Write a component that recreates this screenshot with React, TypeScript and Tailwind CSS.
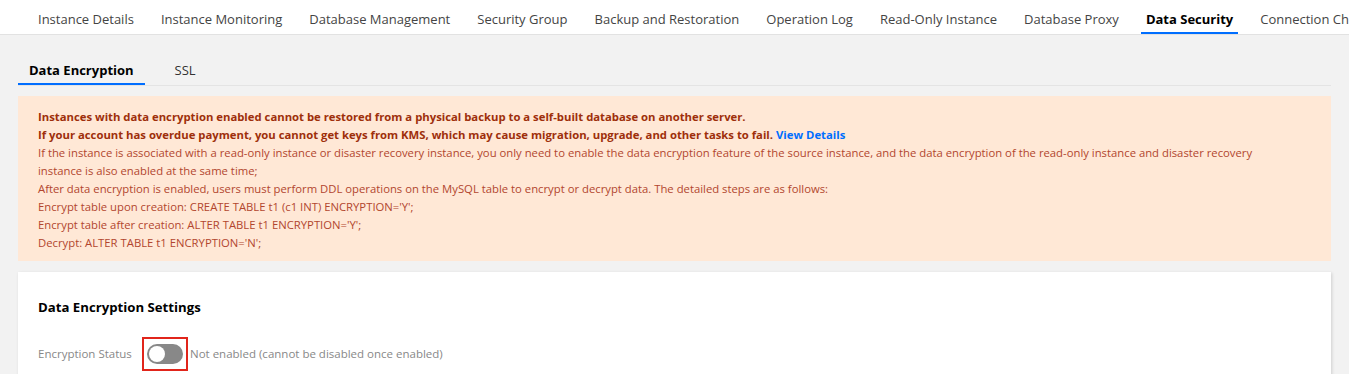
const tabs = [
  "Instance Details",
  "Instance Monitoring",
  "Database Management",
  "Security Group",
  "Backup and Restoration",
  "Operation Log",
  "Read-Only Instance",
  "Database Proxy",
  "Data Security",
  "Connection Check",
];

const font = { fontFamily: '"Open Sans", "Noto Sans", sans-serif' };

export default function App() {
  return (
    <div className="min-h-[374px] w-[1349px] overflow-hidden bg-[#f2f2f2] text-[#000]" style={font}>
      {/* top nav */}
      <div className="flex h-[35px] items-stretch overflow-hidden whitespace-nowrap border-b border-[#e2e2e2] bg-white pl-[33px]">
        {tabs.map((t) => {
          const active = t === "Data Security";
          return (
            <div
              key={t}
              className={`mr-[17px] flex shrink-0 items-center border-b-2 px-[5px] pt-[8px] text-[13px] ${
                active ? "border-[#006eff] font-bold text-black" : "border-transparent text-[#444]"
              }`}
            >
              {t}
            </div>
          );
        })}
      </div>

      <div className="mr-[18px] pl-[18px]">
        {/* sub tabs */}
        <div className="flex h-[51px] items-end border-b border-[#e4e4e4]">
          <div className="flex h-[26px] items-start border-b-2 border-[#006eff] px-[11px] pt-[2px] text-[13px] font-bold">
            Data Encryption
          </div>
          <div className="ml-[19px] flex h-[26px] items-start px-[11px] pt-[2px] text-[13px] text-[#333]">SSL</div>
        </div>

        {/* warning */}
        <div className="mt-[10px] bg-[#ffe8d6] pb-[9px] pl-[20px] pr-[60px] pt-[12px] text-[11.3px] leading-[18px] text-[#b2462e]">
          <p className="font-bold text-[#9e2f0b]">
            Instances with data encryption enabled cannot be restored from a physical backup to a self-built database on
            another server.
          </p>
          <p className="font-bold text-[#9e2f0b]">
            If your account has overdue payment, you cannot get keys from KMS, which may cause migration, upgrade, and
            other tasks to fail. <span className="text-[#006eff]">View Details</span>
          </p>
          <p>
            If the instance is associated with a read-only instance or disaster recovery instance, you only need to enable
            the data encryption feature of the source instance, and the data encryption of the read-only instance and
            disaster recovery instance is also enabled at the same time;
          </p>
          <p>
            After data encryption is enabled, users must perform DDL operations on the MySQL table to encrypt or decrypt
            data. The detailed steps are as follows:
          </p>
          <p>Encrypt table upon creation: CREATE TABLE t1 (c1 INT) ENCRYPTION='Y';</p>
          <p>Encrypt table after creation: ALTER TABLE t1 ENCRYPTION='Y';</p>
          <p>Decrypt: ALTER TABLE t1 ENCRYPTION='N';</p>
        </div>

        {/* settings card */}
        <div className="mt-[11px] h-[120px] bg-white px-[20px] pt-[25px] shadow-[1px_1px_3px_rgba(0,0,0,0.15)]">
          <h3 className="text-[13.2px] font-bold leading-[20px]">Data Encryption Settings</h3>
          <div className="mt-[20px] flex items-center text-[11.5px] text-[#888]">
            <span className="w-[104px]">Encryption Status</span>
            <div className="flex h-[34px] w-[46px] items-center justify-center border-2 border-[#e1251b]">
              <div className="relative h-[20px] w-[36px] rounded-full bg-[#888]">
                <div className="absolute left-[2px] top-[2px] h-[16px] w-[16px] rounded-full bg-white" />
              </div>
            </div>
            <span className="ml-[2px]">Not enabled (cannot be disabled once enabled)</span>
          </div>
        </div>
      </div>
    </div>
  );
}
